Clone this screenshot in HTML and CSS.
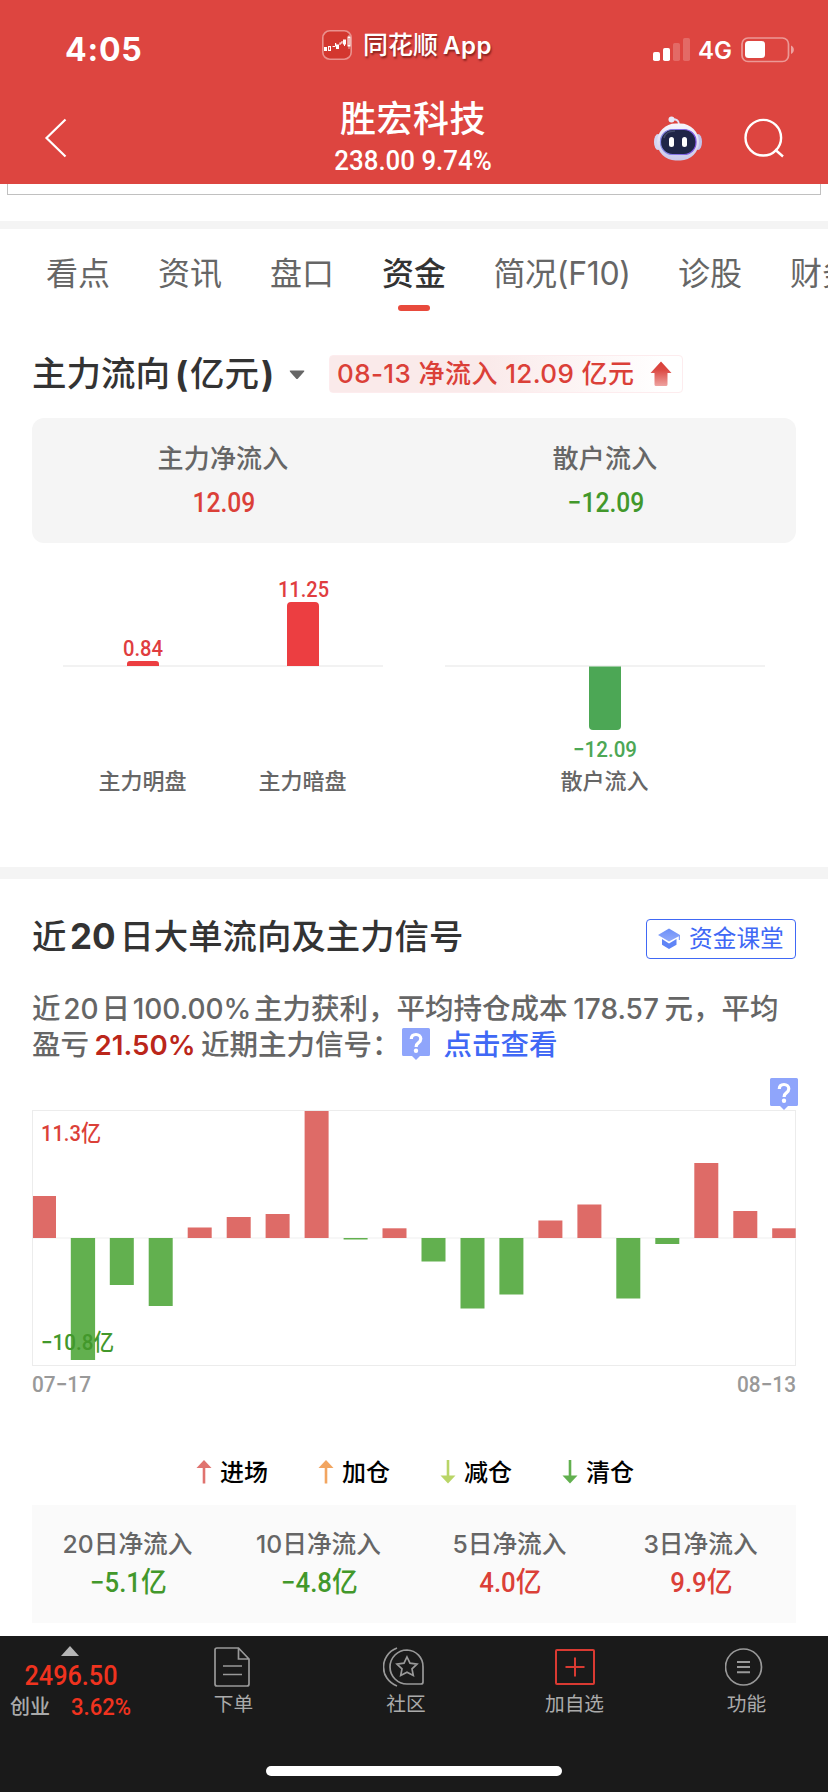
FILE: index.html
```html
<!DOCTYPE html>
<html lang="zh-CN">
<head>
<meta charset="utf-8">
<title>胜宏科技</title>
<link rel="stylesheet" href="styles.css">
</head>
<body>
<svg width="0" height="0" class="defs" aria-hidden="true">
  <defs>
    <linearGradient id="up" x1="0" y1="0" x2="0" y2="1"><stop offset="0" stop-color="#d93f38"/><stop offset=".35" stop-color="#dc4a44"/><stop offset="1" stop-color="#eea3a0"/></linearGradient>
    <linearGradient id="cap" x1="0" y1="0" x2="0" y2="1"><stop offset="0" stop-color="#6c8ff8"/><stop offset="1" stop-color="#92aafa"/></linearGradient>
    <linearGradient id="shell" x1="0" y1="0" x2="0" y2="1"><stop offset="0" stop-color="#f7f6fd"/><stop offset="1" stop-color="#c9c7ea"/></linearGradient>
    <linearGradient id="rim" x1="0" y1="0" x2="1" y2="0"><stop offset="0" stop-color="#8a8fe8"/><stop offset="1" stop-color="#7b4fe0"/></linearGradient>
    <symbol id="help" viewBox="0 0 28 32">
      <path d="M1.5 0h25A1.5 1.5 0 0 1 28 1.5v25a1.5 1.5 0 0 1-1.500 1.500H18l-4 4-4-4H1.500A1.500 1.500 0 0 1 0 26.500v-25A1.500 1.500 0 0 1 1.500 0z" fill="#8fa5fb"/>
      <path d="M9.300 11C9.300 8 11.300 6.500 14 6.500s4.800 1.600 4.800 4.200c0 2-1 3-2.500 4.200-1.500 1.100-2.200 1.900-2.200 4" fill="none" stroke="#fff" stroke-width="3.200"/>
      <circle cx="14" cy="22.700" r="2.200" fill="#fff"/>
    </symbol>
  </defs>
</svg>

<header class="header">
  <div class="status">
    <div class="time">4:05</div>
    <div class="app">
      <svg width="30" height="30" viewBox="0 0 30 30"><rect x=".8" y=".8" width="28.400" height="28.400" rx="7" fill="#d3372f" stroke="#ea918d" stroke-width="1.600"/><g fill="#fff"><rect x="2" y="17" width="3" height="4"/><path d="M6 16h3v5H6zM7 17.200v2.600h1v-2.600z" fill-rule="evenodd"/><path d="M10.500 16h2.500v-3h1.200v3h-.7v1h-3zM14 14.500h3V19h-3zM17.500 12.500h2V11h1v2.500h-2V15h-1zM21 9.500h3v5h-3zM22 14.500h1V16h-1z"/><path d="M25.500 6.500h3v10h-3zm1 1.500v7h1V8z" fill-rule="evenodd"/><rect x="26.500" y="5" width="1" height="14" opacity=".6"/></g></svg>
      <span class="app-cn">同花顺</span><span class="app-en">App</span>
    </div>
    <div class="signals">
      <svg width="38" height="24" viewBox="0 0 38 24" fill="#fff"><rect x="0" y="14" width="7" height="9" rx="1.800"/><rect x="10" y="10" width="7" height="13" rx="1.800"/><g opacity=".2"><rect x="20" y="5" width="7" height="18" rx="1.800"/><rect x="30" y="0" width="7" height="23" rx="1.800"/></g></svg>
      <span class="net">4G</span>
      <svg width="54" height="26" viewBox="0 0 54 26"><rect x="1" y="1" width="46.500" height="23.500" rx="6" fill="none" stroke="#fff" stroke-opacity=".45" stroke-width="1.700"/><rect x="4" y="4" width="20" height="17" rx="3.500" fill="#fff"/><path d="M50 8.500c3.800 1.500 3.800 7 0 8.500z" fill="#fff" opacity=".5"/></svg>
    </div>
  </div>
  <div class="titlebar">
    <svg class="back" width="26" height="44" viewBox="0 0 26 44"><path d="M21.500 3.500 2.500 22l19 18.500" fill="none" stroke="#fff" stroke-width="2.200"/></svg>
    <div class="stock">
      <h1>胜宏科技</h1>
      <div class="quote num">238.00 9.74%</div>
    </div>
    <div class="tools">
      <svg width="48" height="46" viewBox="0 0 48 46"><path d="M17 3.500c5-.8 8 .8 8 5" fill="none" stroke="#dfe0f6" stroke-width="2"/><circle cx="17.500" cy="3.500" r="3" fill="#e6e9f8"/><ellipse cx="4" cy="26" rx="4" ry="8" fill="#d3d5f2"/><ellipse cx="44" cy="26" rx="4" ry="8" fill="#c3c2ea"/><rect x="3" y="7.500" width="42" height="37" rx="18.500" fill="url(#shell)"/><rect x="6.500" y="13.500" width="35.500" height="25" rx="12" fill="#1f2547" stroke="url(#rim)" stroke-width="1.200"/><path d="M10 22c1-5 5-7 11-7" fill="none" stroke="#414968" stroke-width="1.600"/><rect x="15" y="21" width="5" height="10" rx="2.500" fill="#fff"/><rect x="28" y="21" width="5" height="10" rx="2.500" fill="#fff"/></svg>
      <svg width="42" height="42" viewBox="0 0 42 42" fill="none" stroke="#fff" stroke-width="2.400"><circle cx="19.300" cy="20.700" r="17.800"/><path d="M31 32.500l8 7"/></svg>
    </div>
  </div>
</header>

<main class="page">
  <div class="prev"></div>
  <div class="band thin"></div>
  <nav class="tabs">
    <a>看点</a><a>资讯</a><a>盘口</a><a class="on">资金</a><a class="f10">简况(F10)</a><a>诊股</a><a>财务</a>
  </nav>

  <section class="flow">
    <div class="flow-head">
      <h2><span>主力流向</span><b>(</b><span>亿元</span><b>)</b></h2>
      <svg width="16" height="10" viewBox="0 0 16 10"><path d="M1.500.5h13q1.500 0 .5 1.200L9 8.500q-1 1-2 0L1 1.700Q0 .5 1.500.5z" fill="#666"/></svg>
      <div class="badge"><span>08-13 净流入 12.09 亿元</span><svg width="22" height="26" viewBox="0 0 22 26"><path d="M11 .5 21.500 12H17.500v11.500q0 1.500-1.500 1.500H6q-1.500 0-1.500-1.500V12H.5z" fill="url(#up)"/></svg></div>
    </div>
    <div class="card">
      <div><p>主力净流入</p><strong class="num red">12.09</strong></div>
      <div><p>散户流入</p><strong class="num green">−12.09</strong></div>
    </div>
    <svg class="bars" width="828" height="324" viewBox="0 543 828 324">
      <path d="M63 666h320M445 666h320" stroke="#f2f2f2" stroke-width="2"/>
      <path d="M127 666v-2q0-3 3-3h26q3 0 3 3v2zM287 666v-60q0-4 4-4h24q4 0 4 4v60z" fill="#ec3e41"/>
      <path d="M589 666.500v59.500q0 4 4 4h24q4 0 4-4v-59.500z" fill="#4ca755"/>
      <g class="val" fill="#e03d3f"><text x="123" y="656" textLength="40" lengthAdjust="spacingAndGlyphs">0.84</text><text x="278" y="597" textLength="51" lengthAdjust="spacingAndGlyphs">11.25</text></g>
      <text class="val" x="573" y="757" textLength="64" lengthAdjust="spacingAndGlyphs" fill="#4ca755">−12.09</text>
      <g class="name"><text x="98.500" y="789">主力明盘</text><text x="258.500" y="789">主力暗盘</text><text x="560.500" y="789">散户流入</text></g>
    </svg>
  </section>

  <div class="band thick"></div>

  <section class="signal">
    <div class="sig-head">
      <h2>近<b class="n20">20</b>日大单流向及主力信号</h2>
      <a class="class"><svg width="23" height="22" viewBox="0 0 23 22"><path d="M4 11l7 4.500 7.500-4.500v5.700L11 21l-7-4.300z" fill="#5f84f6"/><path d="M11 .5 22 7v5h-1.200V8.200L11 13.500 0 7z" fill="url(#cap)"/></svg>资金课堂</a>
    </div>
    <div class="summary">
      <div>近<i class="w40">20</i>日<i class="w124">100.00%</i>主力获利，平均持仓成本<i class="w98">178.57</i>元，平均</div>
      <div>盈亏<i class="w112 deep">21.50%</i>近期主力信号：<svg class="tip" width="28" height="32"><use href="#help"/></svg><a class="look">点击查看</a></div>
    </div>
    <svg class="chart" width="828" height="336" viewBox="0 1072 828 336">
      <rect x="32.500" y="1110.500" width="763" height="255" fill="#fff" stroke="#ececec"/>
      <path d="M33 1238h763" stroke="#f4f4f4" stroke-width="1.500"/>
      <g fill="#de6b67">
        <rect x="33" y="1196" width="23" height="42"/><rect x="187.700" y="1227.500" width="24" height="10.500"/><rect x="226.700" y="1217" width="24" height="21"/><rect x="265.600" y="1214" width="24" height="24"/><rect x="304.600" y="1111" width="24" height="127"/><rect x="382.500" y="1228.300" width="24" height="9.700"/><rect x="538.400" y="1220.500" width="24" height="17.500"/><rect x="577.400" y="1204.500" width="24" height="33.500"/><rect x="694.300" y="1163" width="24" height="75"/><rect x="733.300" y="1211" width="24" height="27"/><rect x="772.200" y="1228.300" width="23.500" height="9.700"/>
      </g>
      <g fill="#62b04f">
        <rect x="70.800" y="1238" width="24.300" height="122"/><rect x="109.800" y="1238" width="24" height="47"/><rect x="148.700" y="1238" width="24" height="68"/><rect x="343.600" y="1238" width="24" height="1.500"/><rect x="421.500" y="1238" width="24" height="23.500"/><rect x="460.500" y="1238" width="24" height="70.500"/><rect x="499.400" y="1238" width="24" height="56.500"/><rect x="616.300" y="1238" width="24" height="60.500"/><rect x="655.300" y="1238" width="24" height="6"/>
      </g>
      <g class="val"><text x="41" y="1140.500" textLength="60" lengthAdjust="spacingAndGlyphs" fill="#db4038">11.3亿</text><text x="41" y="1350" textLength="73" lengthAdjust="spacingAndGlyphs" fill="#42982b">−10.8亿</text></g>
      <g class="val" fill="#999"><text x="32" y="1392" textLength="59" lengthAdjust="spacingAndGlyphs">07−17</text><text x="737" y="1392" textLength="59" lengthAdjust="spacingAndGlyphs">08−13</text></g>
      <use href="#help" x="770" y="1078" width="28" height="32"/>
    </svg>
    <div class="legend">
      <span><svg width="16" height="24" viewBox="0 0 16 24" fill="#e0736f"><path d="M8 0l7.500 8h-6.200v15.500H6.700V8H.5z"/></svg>进场</span>
      <span><svg width="16" height="24" viewBox="0 0 16 24" fill="#f2a560"><path d="M8 0l7.500 8h-6.200v15.500H6.700V8H.5z"/></svg>加仓</span>
      <span><svg width="16" height="24" viewBox="0 0 16 24" fill="#b9d567"><path d="M8 23.500l7.500-8h-6.200V0H6.700v15.500H.5z"/></svg>减仓</span>
      <span><svg width="16" height="24" viewBox="0 0 16 24" fill="#62b04f"><path d="M8 23.500l7.500-8h-6.200V0H6.700v15.500H.5z"/></svg>清仓</span>
    </div>
    <div class="nets">
      <div><p>20日净流入</p><strong class="num green">−5.1亿</strong></div>
      <div><p>10日净流入</p><strong class="num green">−4.8亿</strong></div>
      <div><p>5日净流入</p><strong class="num red">4.0亿</strong></div>
      <div><p>3日净流入</p><strong class="num red">9.9亿</strong></div>
    </div>
  </section>
</main>

<footer class="dock">
  <div class="items">
    <div class="index">
      <svg width="18" height="10" viewBox="0 0 18 10"><path d="M9 0l9 10H0z" fill="#b5b5b5"/></svg>
      <div class="point num">2496.50</div>
      <div class="chg"><span>创业</span><span class="pct num">3.62%</span></div>
    </div>
    <a><svg width="36" height="40" viewBox="0 0 36 40" fill="none" stroke="#999" stroke-width="1.700"><path d="M24.500 1H3Q1 1 1 3v34q0 2 2 2h30q2 0 2-2V12zM24.500 1v11H35M9 19h19M9 27.500h19"/></svg><span class="r">下单</span></a>
    <a class="community"><svg width="42" height="40" viewBox="0 0 42 40" fill="none" stroke="#999" stroke-width="1.700"><path d="M14 1C-4 8-4 32 14 39"/><path d="M24 3a17 17 0 0 0 0 34h14q2 0 2-2V20A16.500 16.500 0 0 0 24 3z"/><path d="M24 10l3 6.200 7 .9-5 4.700 1.300 6.700L24 25.200l-6.300 3.300 1.300-6.700-5-4.700 7-.9z"/></svg><span class="r">社区</span></a>
    <a class="add"><svg width="40" height="40" viewBox="0 0 40 40" fill="none" stroke="#d93a32" stroke-width="2"><rect x="1" y="3" width="38" height="34" rx="1"/><path d="M20 10.500v19M10.500 20h19"/></svg><span>加自选</span></a>
    <a><svg width="40" height="40" viewBox="0 0 40 40" fill="none" stroke="#999" stroke-width="1.700"><circle cx="18.500" cy="20" r="18"/><path d="M12 15h13M12 20h13M12 25.300h13" stroke-width="2"/></svg><span class="r">功能</span></a>
  </div>
  <div class="home"></div>
</footer>
</body>
</html>
```
FILE: styles.css
```css
* { box-sizing: border-box; }
body {
  margin: 0;
  width: 828px;
  height: 1792px;
  overflow: hidden;
  display: flex;
  flex-direction: column;
  background: #fff;
  color: #666;
  font-family: Inter, "Noto Sans CJK SC", sans-serif;
}
h1, h2, p { margin: 0; font-weight: 500; }
i { font-style: normal; }
svg { display: block; flex: none; }
.defs { position: absolute; }
.num { font-family: Roboto, "Noto Sans CJK SC", sans-serif; font-weight: 500; white-space: nowrap; }
.red { color: #db4038; }
.green { color: #42982b; }

/* header */
.header { height: 184px; flex: none; background: #dd4540; color: #fff; }
.status { height: 90px; display: grid; grid-template-columns: 322px 331px 1fr; align-items: start; }
.time { padding: 30px 0 0 65px; font-size: 32px; line-height: 40px; font-weight: 700; letter-spacing: .8px; }
.app { display: flex; align-items: center; padding-top: 30px; height: 60px; text-shadow: 1px 2px 2px rgba(60, 0, 0, .55); font-size: 25px; line-height: 30px; font-weight: 500; }
.app-cn { margin-left: 11px; }
.app-en { margin-left: 5px; font-size: 24px; font-weight: 600; letter-spacing: .5px; padding-top: 1px; }
.signals { display: flex; padding-top: 37px; }
.signals svg:first-child { margin-top: 1px; }
.net { width: 50px; padding-left: 7px; font-size: 24px; line-height: 28px; font-weight: 600; }
.titlebar { height: 94px; display: grid; grid-template-columns: 322px 182px 1fr; }
.back { margin: 26px 0 0 44px; }
.stock { text-align: center; }
h1 { font-size: 36px; letter-spacing: .5px; line-height: 44px; padding-top: 7px; height: 51px; }
.quote { font-size: 27.500px; line-height: 40px; transform: scaleX(.94); }
.tools { display: flex; gap: 42px; padding: 25px 0 0 150px; }
.tools svg:first-child { margin-top: 1px; }
.tools svg:last-child { margin-top: 2px; }

/* page */
.page { height: 1452px; flex: none; overflow: hidden; }
.prev { height: 11px; margin: 0 7px 26px; border: 1px solid #c0c0c0; border-top: 0; }
.band { background: #f4f4f4; }
.thin { height: 8px; }
.thick { height: 12px; }
.tabs { height: 93px; padding: 20px 0 0 46px; display: flex; gap: 48px; overflow: hidden; font-size: 32px; line-height: 50px; white-space: nowrap; }
.tabs a { flex: none; display: flex; flex-direction: column; align-items: center; }
.f10 { width: 136px; letter-spacing: -.3px; }
.on { color: #333; font-weight: 500; }
.on::after { content: ""; width: 32px; height: 6px; margin-top: 6px; border-radius: 3px; background: #e84a3c; }

.flow-head { height: 96px; padding: 33px 32px 0; display: flex; align-items: flex-start; }
h2 { color: #333; font-size: 34.500px; line-height: 38px; white-space: nowrap; }
.flow-head h2 { display: flex; width: 257px; }
.flow-head h2 b { width: 17px; text-align: center; font-size: 35px; }
.flow-head h2 b:first-of-type { margin-left: 3px; }
.flow-head > svg { margin-top: 15px; }
.badge { margin-left: 24px; width: 354px; height: 38px; border: 1px solid #fdecee; border-radius: 4px; background: linear-gradient(90deg, #faeaea 45%, #fff 95%); display: flex; align-items: center; padding-left: 7px; color: #db4038; font-size: 26px; font-weight: 500; letter-spacing: .4px; white-space: nowrap; }
.badge span { width: 313px; line-height: 38px; }
.card { margin: 0 32px; height: 125px; border-radius: 12px; background: #f5f5f5; display: grid; grid-template-columns: 1fr 1fr; text-align: center; padding-top: 24px; }
.card p { font-size: 26px; line-height: 34px; letter-spacing: .2px; }
.card strong { display: block; margin-top: 8px; font-size: 28px; line-height: 38px; transform: scaleX(.88); padding-left: 2px; }
.val { font: 500 22.500px Roboto, "Noto Sans CJK SC", sans-serif; }
.name { font: 500 22px "Noto Sans CJK SC", sans-serif; fill: #666; }

.sig-head { padding: 38px 32px 0; height: 112px; display: flex; justify-content: space-between; }
.sig-head h2 { font-size: 34.400px; }
.n20 { display: inline-block; width: 53px; text-align: center; font-size: 35px; }
.class { margin-top: 2px; width: 150px; height: 40px; border: 1px solid #4068f5; border-radius: 4px; display: flex; align-items: center; gap: 8px; padding-left: 11px; color: #4068f5; font-size: 23.700px; line-height: 38px; }
.summary { padding-left: 32px; height: 81px; font-size: 28.500px; line-height: 36px; font-weight: 500; white-space: nowrap; }
.summary div { height: 36px; }
.summary div:last-child { display: flex; }
.summary i { display: inline-block; text-align: center; font-size: 28px; }
.w40 { width: 41px; }
.w124 { width: 124px; }
.w98 { width: 97px; }
.w112 { width: 112px; }
.summary .deep { color: #bb261a; font-weight: 600; font-size: 27.700px; }
.tip { margin: 1px 0 0 1px; }
.look { margin-left: 14px; color: #4068f5; }
.legend { height: 97px; padding: 49px 0 0 196px; display: flex; gap: 50px; color: #000; font-size: 24px; line-height: 32px; font-weight: 500; }
.legend span { display: flex; gap: 8px; width: 72px; white-space: nowrap; }
.legend svg { margin-top: 3px; }
.nets { margin: 0 32px; height: 118px; background: #fafafa; display: grid; grid-template-columns: repeat(4, 1fr); padding-top: 23px; text-align: center; }
.nets p { font-size: 24.700px; line-height: 32px; }
.nets strong { display: block; margin-top: 4px; font-size: 28px; line-height: 38px; transform: scaleX(.92); padding-left: 2px; }

/* dock */
.dock { height: 156px; flex: none; background: #1a1a1a; color: #aaa; }
.items { display: grid; grid-template-columns: 146px repeat(4, 171px); height: 130px; }
.index { padding-top: 10px; }
.index svg { margin-left: 61px; }
.point { width: 142px; text-align: center; margin-top: 1px; color: #f0331f; font-size: 28px; line-height: 38px; transform: scaleX(.9); }
.chg { display: flex; padding-left: 10px; font-size: 20px; line-height: 24px; font-weight: 500; }
.pct { margin-left: 21px; color: #f0331f; font-size: 23.500px; transform: scaleX(.94); transform-origin: left; }
.items a { display: flex; flex-direction: column; align-items: center; padding-top: 11px; font-size: 19.700px; line-height: 28px; gap: 3px; white-space: nowrap; }
.items .community { padding-left: 3px; }
.items .add { padding-left: 2px; }
.r { padding-left: 4px; }
.home { width: 296px; height: 10px; margin: 0 auto; border-radius: 5px; background: #fff; }
```
